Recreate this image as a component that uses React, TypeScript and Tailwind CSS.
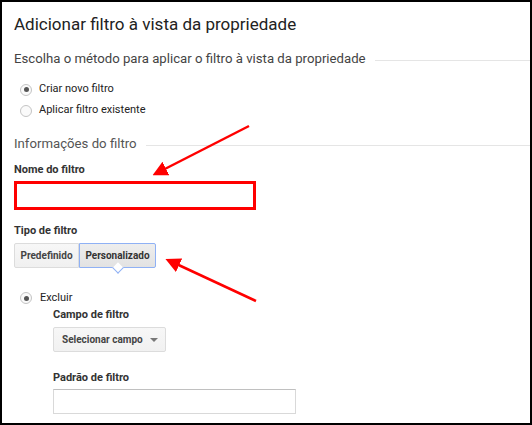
import React from "react";

function Radio({ checked, label }: { checked?: boolean; label: string }) {
	return (
		<div className="flex items-center h-[21px]">
			<div className="ml-[6px] w-[12px] h-[12px] rounded-full border border-[#c4c4c4] bg-[#fafafa] flex items-center justify-center">
				{checked && <div className="w-[5px] h-[5px] rounded-full bg-[#555]"></div>}
			</div>
			<span className="ml-[7px] text-[11px] text-[#222]">{label}</span>
		</div>
	);
}

function Arrows() {
	return (
		<svg className="absolute left-0 top-0 pointer-events-none" width="532" height="425" viewBox="0 0 532 425">
			<defs>
				<marker id="head" markerWidth="6" markerHeight="6" refX="4" refY="3" orient="auto" markerUnits="strokeWidth">
					<path d="M0,0 L6,3 L0,6 z" fill="#ff0000" />
				</marker>
			</defs>
			<line x1="247" y1="124" x2="155" y2="171" stroke="#ff0000" strokeWidth="2.5" markerEnd="url(#head)" />
			<line x1="254" y1="299" x2="168" y2="259" stroke="#ff0000" strokeWidth="2.5" markerEnd="url(#head)" />
		</svg>
	);
}

export default function App() {
	return (
		<div className="relative w-[532px] h-[425px] border-2 border-black bg-white overflow-hidden" style={{ fontFamily: "Roboto, Arial, sans-serif" }}>
			<div className="pl-3 pt-[10px]">
				<h1 className="text-[17px] leading-[24px] text-[#222]">Adicionar filtro à vista da propriedade</h1>

				<div className="flex items-center mt-[13px] h-[20px]">
					<span className="text-[13.2px] text-[#444]">Escolha o método para aplicar o filtro à vista da propriedade</span>
					<div className="flex-1 ml-[9px] border-t border-[#e5e5e5] mt-[2px]"></div>
				</div>

				<div className="mt-[10px]">
					<Radio checked label="Criar novo filtro" />
					<Radio label="Aplicar filtro existente" />
				</div>

				<div className="flex items-center mt-[13px] h-[20px]">
					<span className="text-[13.2px] text-[#555]">Informações do filtro</span>
					<div className="flex-1 ml-[9px] border-t border-[#e5e5e5] mt-[3px]"></div>
				</div>

				<div className="mt-[8px] text-[11px] leading-[16px] font-bold text-[#333]">Nome do filtro</div>
				<div className="mt-[3px] w-[242px] h-[29px] border-[3px] border-[#ff0000] bg-white"></div>

				<div className="mt-[13px] text-[11px] leading-[16px] font-bold text-[#333]">Tipo de filtro</div>
				<div className="mt-[4px] flex h-[25px]">
					<div className="w-[65px] flex items-center justify-center border border-[#dcdcdc] rounded-l-[2px] bg-gradient-to-b from-[#f7f7f7] to-[#f0f0f0] text-[10px] font-bold text-[#444] whitespace-nowrap">Predefinido</div>
					<div className="relative w-[77px] flex items-center justify-center border border-[#8fb1f5] rounded-r-[2px] bg-gradient-to-b from-[#eeeeee] to-[#e2e2e2] text-[10px] font-bold text-[#333] whitespace-nowrap">
						Personalizado
						<div className="absolute left-1/2 -bottom-[5px] -ml-[4px] w-[8px] h-[8px] rotate-45 bg-white border-r border-b border-[#8fb1f5]"></div>
					</div>
				</div>

				<div className="mt-[20px] flex items-center h-[20px]">
					<div className="ml-[6px] w-[12px] h-[12px] rounded-full border border-[#c4c4c4] bg-[#fafafa] flex items-center justify-center">
						<div className="w-[5px] h-[5px] rounded-full bg-[#555]"></div>
					</div>
					<span className="ml-[8px] text-[11px] text-[#222]">Excluir</span>
				</div>

				<div className="ml-[39px]">
					<div className="text-[11px] leading-[14px] font-bold text-[#333]">Campo de filtro</div>
					<div className="mt-[5px] w-[113px] h-[25px] flex items-center justify-between pl-[8px] pr-[7px] border border-[#dcdcdc] rounded-[2px] bg-gradient-to-b from-[#f7f7f7] to-[#f1f1f1]">
						<span className="text-[10px] font-bold text-[#444] whitespace-nowrap">Selecionar campo</span>
						<div className="w-0 h-0 border-l-[4px] border-r-[4px] border-t-[4px] border-l-transparent border-r-transparent border-t-[#777] mt-[1px]"></div>
					</div>

					<div className="mt-[19px] text-[11px] leading-[14px] font-bold text-[#333]">Padrão de filtro</div>
					<div className="mt-[4px] w-[243px] h-[25px] border border-[#d9d9d9] border-t-[#c0c0c0] bg-white"></div>
				</div>
			</div>
			<Arrows />
		</div>
	);
}
